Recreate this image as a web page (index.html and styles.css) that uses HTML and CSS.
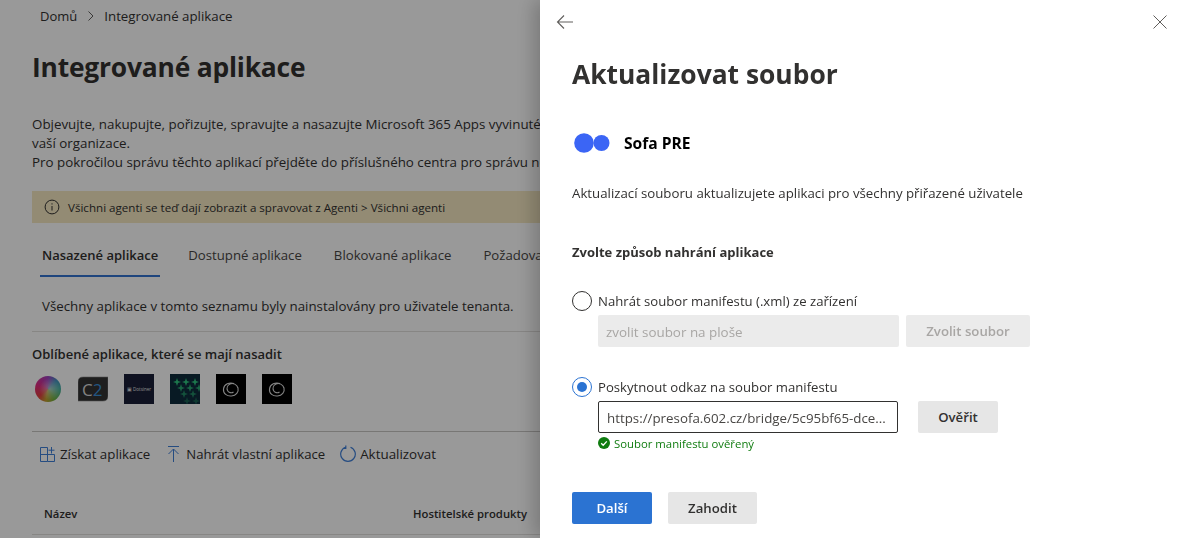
FILE: index.html
```html
<!DOCTYPE html>
<html lang="cs">
<head>
<meta charset="utf-8">
<title>Integrované aplikace</title>
<link rel="stylesheet" href="styles.css">
</head>
<body>
<main class="page">
  <nav class="crumbs">
    <span>Domů</span>
    <svg class="crumb-sep" width="8" height="12" viewBox="0 0 8 12"><path d="M1.500 1.500 6 6l-4.500 4.500" fill="none" stroke="#605e5c"/></svg>
    <span>Integrované aplikace</span>
  </nav>
  <h1 class="page-title">Integrované aplikace</h1>
  <p class="intro">Objevujte, nakupujte, pořizujte, spravujte a nasazujte Microsoft 365 Apps vyvinuté společností Microsoft a jejími partnery pro uživatele<br>vaší organizace.<br>Pro pokročilou správu těchto aplikací přejděte do příslušného centra pro správu nebo na stránku</p>
  <div class="banner">
    <svg width="16" height="16" viewBox="0 0 16 16"><circle cx="8" cy="8" r="6.900" fill="none" stroke="#323130"/><path d="M8 7v4.500M8 4.300v1.200" stroke="#323130" fill="none"/></svg>
    <span>Všichni agenti se teď dají zobrazit a spravovat z Agenti &gt; Všichni agenti</span>
  </div>
  <div class="tabs">
    <span class="tab tab-active">Nasazené aplikace</span>
    <span class="tab">Dostupné aplikace</span>
    <span class="tab">Blokované aplikace</span>
    <span class="tab">Požadované</span>
  </div>
  <p class="tab-note">Všechny aplikace v tomto seznamu byly nainstalovány pro uživatele tenanta.</p>
  <h2 class="fav-title">Oblíbené aplikace, které se mají nasadit</h2>
  <div class="favs">
    <div class="fav"><div class="orb"></div></div>
    <div class="fav">
      <svg width="30" height="30" viewBox="0 0 30 30"><path d="M5 3h25v19q0 5-5 5H0V8q0-5 5-5Z" fill="#333" stroke="#8a8a8a" stroke-width=".6"/><text x="4" y="22" class="c2-text" fill="#d8d8d8">C<tspan fill="#3a8fd8">2</tspan></text></svg>
    </div>
    <div class="fav fav-navy"><span class="tiny">▣ Dotsiner</span></div>
    <div class="fav fav-teal">
      <svg width="30" height="30" viewBox="0 0 30 30">
        <defs><path id="st" d="M0-4 1-1 4 0 1 1 0 4-1 1-4 0-1-1Z" fill="#2fc77f"/></defs>
        <use href="#st" x="7" y="8"/><use href="#st" x="16" y="8"/><use href="#st" x="25" y="8"/>
        <g opacity=".8"><use href="#st" x="11" y="14"/><use href="#st" x="20" y="14"/><use href="#st" x="29" y="14"/></g>
        <g opacity=".6"><use href="#st" x="14" y="20"/><use href="#st" x="23" y="20"/></g>
        <g opacity=".35"><use href="#st" x="17" y="27"/><use href="#st" x="26" y="27"/></g>
      </svg>
    </div>
    <div class="fav fav-black">
      <svg width="30" height="30" viewBox="0 0 30 30"><path d="M18 9.500c-4.500-1.500-10 .5-10.500 5.500-.5 4.500 3.500 7.500 8 7 4.500-.5 7.500-4 6.500-8-1-3.500-5-5.500-8-4-2.500 1.200-3.500 4-2.500 6.500 1 2.200 4 3 6 1.500" fill="none" stroke="#ddd" stroke-width="1.100"/></svg>
    </div>
    <div class="fav fav-black">
      <svg width="30" height="30" viewBox="0 0 30 30"><path d="M18 9.500c-4.500-1.500-10 .5-10.500 5.500-.5 4.500 3.500 7.500 8 7 4.500-.5 7.500-4 6.500-8-1-3.500-5-5.500-8-4-2.500 1.200-3.500 4-2.500 6.500 1 2.200 4 3 6 1.500" fill="none" stroke="#ddd" stroke-width="1.100"/></svg>
    </div>
  </div>
  <div class="toolbar">
    <span class="tool">
      <svg width="16" height="16" viewBox="0 0 16 16"><path d="M.5 1.500h7v14h-7zM.5 8.500h14v7h-7M11.500 1v6.500M8.500 4.200h6" fill="none" stroke="#3f7fd8"/></svg>
      <span>Získat aplikace</span>
    </span>
    <span class="tool tool-upload">
      <svg width="16" height="16" viewBox="0 0 16 16"><path d="M2 .5h11M7.500 16V3M2.500 8l5-5 5 5" fill="none" stroke="#3f7fd8"/></svg>
      <span>Nahrát vlastní aplikace</span>
    </span>
    <span class="tool tool-refresh">
      <svg width="16" height="17" viewBox="0 0 16 17"><path d="M5.500 2.200a7.300 7.300 0 1 0 5 0M5.800 .5v3H2.800" fill="none" stroke="#3f7fd8" stroke-width="1.200"/></svg>
      <span>Aktualizovat</span>
    </span>
  </div>
  <div class="table-head">
    <span class="col-name">Název</span>
    <span>Hostitelské produkty</span>
  </div>
</main>

<div class="scrim"></div>

<aside class="panel">
  <div class="panel-top">
    <svg width="18" height="16" viewBox="0 0 18 16"><path d="M17 8H1.500M8 1.500 1.500 8 8 14.500" fill="none" stroke="#605e5c" stroke-width="1.100"/></svg>
    <svg width="14" height="14" viewBox="0 0 14 14"><path d="m.5.500 13 13M13.500.500l-13 13" fill="none" stroke="#605e5c"/></svg>
  </div>
  <h2 class="panel-title">Aktualizovat soubor</h2>
  <div class="app-row">
    <svg width="36" height="20" viewBox="0 0 36 20"><circle cx="10" cy="10" r="9.800" fill="#3b65f5"/><circle cx="27.500" cy="10" r="8" fill="#3b65f5"/></svg>
    <strong>Sofa PRE</strong>
  </div>
  <p class="panel-desc">Aktualizací souboru aktualizujete aplikaci pro všechny přiřazené uživatele</p>
  <h3 class="method-title">Zvolte způsob nahrání aplikace</h3>

  <div class="option option-first">
    <div class="radio-line"><span class="radio"></span><span>Nahrát soubor manifestu (.xml) ze zařízení</span></div>
    <div class="field-row">
      <span class="field field-off">zvolit soubor na ploše</span>
      <span class="btn btn-off">Zvolit soubor</span>
    </div>
  </div>

  <div class="option option-second">
    <div class="radio-line"><span class="radio radio-on"></span><span>Poskytnout odkaz na soubor manifestu</span></div>
    <div class="field-row field-row-wide">
      <span class="field field-on">https://presofa.602.cz/bridge/5c95bf65-dce...</span>
      <span class="btn btn-verify">Ověřit</span>
    </div>
    <div class="status">
      <svg width="12" height="12" viewBox="0 0 12 12"><circle cx="6" cy="6" r="6" fill="#107c10"/><path d="m3.200 6.200 2 2 3.600-3.800" fill="none" stroke="#fff" stroke-width="1.300"/></svg>
      <span>Soubor manifestu ověřený</span>
    </div>
  </div>

  <div class="actions">
    <span class="btn btn-primary">Další</span>
    <span class="btn btn-secondary">Zahodit</span>
  </div>
</aside>
</body>
</html>
```

FILE: styles.css
```css
* { box-sizing: border-box; }

html, body {
  margin: 0;
  height: 538px;
  overflow: hidden;
  background: #fff;
  font-family: "Open Sans", "Liberation Sans", sans-serif;
  font-size: 13.5px;
  color: #323130;
}

.page {
  width: 540px;
  height: 538px;
  padding: 0 0 0 32px;
  overflow: hidden;
}

.crumbs {
  display: flex;
  align-items: center;
  height: 32px;
  padding-left: 8px;
  gap: 9.500px;
  font-size: 13px;
}

.crumbs span:last-child { font-size: 13.300px; }

.page-title {
  margin: 16px 0 0;
  height: 38px;
  line-height: 38px;
  font-size: 26.400px;
  font-weight: 700;
  letter-spacing: -.2px;
  white-space: nowrap;
}

.intro {
  margin: 29px 0 0;
  line-height: 19px;
  font-size: 13.350px;
  white-space: nowrap;
}

.banner {
  display: flex;
  align-items: center;
  gap: 8px;
  height: 32px;
  margin-top: 19px;
  padding-left: 12px;
  background: #f5e8c2;
  font-size: 11.600px;
}

.tabs {
  display: flex;
  height: 54px;
  padding-left: 8px;
  gap: 28px;
  font-size: 13.200px;
}

.tab {
  display: flex;
  align-items: flex-end;
  height: 54px;
  padding: 0 2px 13px;
  color: #484644;
  white-space: nowrap;
}

.tab-active {
  margin-right: -2px;
  font-size: 13px;
  font-weight: 600;
  color: #323130;
  border-bottom: 2px solid #3374d0;
  padding-bottom: 11px;
}

.tab-note {
  display: flex;
  align-items: center;
  height: 55px;
  margin: 0;
  padding: 3px 0 0 10px;
  font-size: 13.300px;
  border-bottom: 1px solid #e1dfdd;
}

.fav-title {
  margin: 12px 0 0;
  height: 20px;
  line-height: 20px;
  font-size: 13px;
  font-weight: 600;
}

.favs {
  display: flex;
  gap: 16px;
  height: 30px;
  margin-top: 10px;
}

.fav {
  width: 30px;
  height: 30px;
  flex: none;
  display: flex;
  align-items: center;
  justify-content: center;
}

.orb {
  width: 26px;
  height: 26px;
  margin-left: 2px;
  border-radius: 50%;
  background:
    radial-gradient(circle at 58% 50%, rgba(230, 225, 215, .6) 0, rgba(255, 255, 255, 0) 55%),
    conic-gradient(#a040c0, #4090c0 45deg, #40b0a0 90deg, #70b040 150deg, #c0a030 190deg, #e04040 230deg, #e02a80 290deg, #a040c0);
}

.c2-text {
  font-family: "Open Sans", sans-serif;
  font-size: 17px;
}

.fav-navy { background: #1a1f38; }
.fav-teal { background: #0e2c3c; }
.fav-black { background: #000; }

.tiny {
  font-size: 4.500px;
  color: #e0e0e0;
  white-space: nowrap;
}

.toolbar {
  display: flex;
  align-items: center;
  height: 46px;
  margin-top: 27px;
  padding: 0 0 2px 8px;
  border-top: 1px solid #c8c6c4;
  font-size: 13.300px;
  color: #323130;
}

.tool {
  display: flex;
  align-items: center;
  gap: 4px;
  white-space: nowrap;
}

.tool-upload {
  margin-left: 16px;
  font-size: 13.150px;
}

.tool-refresh {
  margin-left: 15px;
  font-size: 13.400px;
}

.table-head {
  display: flex;
  align-items: center;
  height: 58px;
  padding-top: 15px;
  font-size: 11.300px;
  font-weight: 600;
  border-bottom: 1px solid #e1dfdd;
}

.col-name {
  width: 381px;
  padding-left: 12px;
}

.scrim {
  position: fixed;
  inset: 0;
  background: rgba(0, 0, 0, .4);
}

.panel {
  position: fixed;
  top: 0;
  right: 0;
  bottom: 0;
  width: 639px;
  padding: 0 12px 0 32px;
  background: #fff;
  box-shadow: -6px 0 18px rgba(0, 0, 0, .22);
  overflow: hidden;
}

.panel-top {
  display: flex;
  align-items: center;
  justify-content: space-between;
  height: 44px;
  margin-left: -16px;
}

.panel-title {
  margin: 10px 0 0;
  height: 40px;
  line-height: 40px;
  font-size: 26.400px;
  font-weight: 700;
  white-space: nowrap;
}

.app-row {
  display: flex;
  align-items: center;
  gap: 14px;
  height: 24px;
  margin-top: 37px;
  padding-left: 2px;
  font-size: 15.600px;
  color: #000;
}

.app-row strong { font-weight: 700; }

.panel-desc {
  margin: 28px 0 0;
  height: 20px;
  line-height: 20px;
  font-size: 13.250px;
  white-space: nowrap;
}

.method-title {
  margin: 39px 0 0;
  height: 20px;
  line-height: 20px;
  font-size: 13px;
  font-weight: 700;
}

.option-first { margin-top: 29px; }
.option-second { margin-top: 30px; }

.radio-line {
  display: flex;
  align-items: center;
  gap: 6px;
  height: 20px;
  font-size: 13.150px;
  white-space: nowrap;
}

.radio {
  display: flex;
  align-items: center;
  justify-content: center;
  width: 20px;
  height: 20px;
  flex: none;
  border: 1px solid #323130;
  border-radius: 50%;
}

.radio-on { border-color: #2b73d2; }

.radio-on::after {
  content: "";
  width: 10px;
  height: 10px;
  border-radius: 50%;
  background: #2b73d2;
}

.field-row {
  display: flex;
  gap: 7px;
  margin: 4px 0 0 26px;
}

.field-row-wide { gap: 20px; }

.field {
  display: flex;
  align-items: center;
  height: 32px;
  padding: 1px 0 0 8px;
  white-space: nowrap;
  overflow: hidden;
  border-radius: 2px;
}

.field-off {
  width: 301px;
  background: #ebebeb;
  color: #a8a6a4;
  font-size: 13.400px;
}

.field-on {
  width: 300px;
  border: 1px solid #323130;
  color: #484644;
  font-size: 13.340px;
}

.btn {
  display: flex;
  align-items: center;
  justify-content: center;
  height: 32px;
  border-radius: 2px;
  font-size: 13.200px;
  font-weight: 600;
  white-space: nowrap;
}

.btn-off {
  width: 124px;
  background: #ebebeb;
  color: #a8a6a4;
}

.btn-verify,
.btn-secondary {
  background: #e6e6e6;
  color: #323130;
}

.btn-verify { width: 80px; }

.status {
  display: flex;
  align-items: center;
  gap: 4px;
  height: 16px;
  margin: 2px 0 0 26px;
  font-size: 11.350px;
  color: #107c10;
}

.actions {
  display: flex;
  gap: 16px;
  margin-top: 41px;
}

.btn-primary {
  width: 80px;
  background: #2b73d2;
  color: #fff;
}

.btn-secondary { width: 89px; }
```
